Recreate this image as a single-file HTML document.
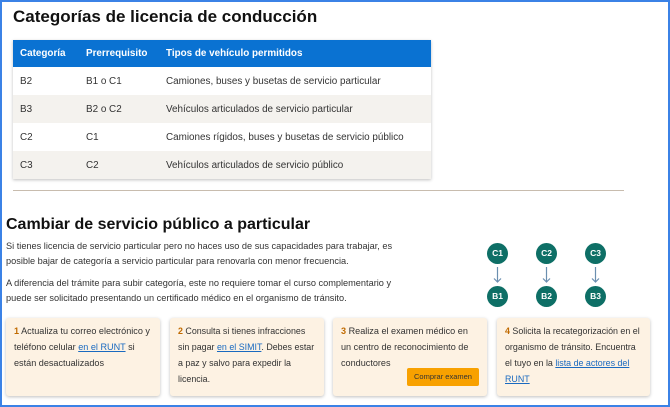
<!DOCTYPE html>
<html><head><meta charset="utf-8"><style>
*{margin:0;padding:0;box-sizing:border-box}
body{width:670px;height:407px;overflow:hidden;background:#fff;font-family:"Liberation Sans",sans-serif;color:#222;position:relative}
.frame{position:absolute;inset:0;border:2px solid #3b82e6}
h1{position:absolute;left:13px;top:7px;font-size:17px;font-weight:bold;color:#111}
table{position:absolute;left:13px;top:40px;width:418px;border-collapse:collapse;font-size:9.9px;box-shadow:0 1px 3px rgba(0,0,0,.25)}
th{background:#0a72d2;color:#fff;text-align:left;font-weight:bold;height:27px;padding-left:7px}
td{height:28px;padding-left:7px;color:#333}
.hr{position:absolute;left:13px;top:190px;width:611px;height:1px;background:#c8bcae}
h2{position:absolute;left:6px;top:216px;font-size:16px;font-weight:bold;color:#111}
p{position:absolute;left:6px;font-size:9.2px;line-height:15px;color:#333;width:396px}
.c{position:absolute;width:21px;height:21px;border-radius:50%;background:#0e6f66;color:#fff;font-size:8.5px;font-weight:bold;text-align:center;line-height:21px}
.ar{position:absolute;width:9px;height:16px;top:267px}
.card{position:absolute;top:318px;height:78px;background:#fdf2e3;border-radius:3px;box-shadow:0 1px 3px rgba(0,0,0,.25);font-size:9.1px;line-height:16px;padding:5px 8px;color:#333}
.nw{white-space:nowrap;font-size:8.9px}
.card b{color:#c06a00}
a{color:#1a6ac0;text-decoration:underline}
.btn{position:absolute;left:407px;top:368px;width:72px;height:18px;background:#f8a100;border-radius:2px;font-size:7.5px;text-align:center;line-height:18px;color:#333}
</style></head><body>
<h1>Categorías de licencia de conducción</h1>
<table>
<tr><th style="width:66px">Categoría</th><th style="width:80px">Prerrequisito</th><th>Tipos de vehículo permitidos</th></tr>
<tr><td style="background:#fff">B2</td><td style="background:#fff">B1 o C1</td><td style="background:#fff">Camiones, buses y busetas de servicio particular</td></tr>
<tr><td style="background:#f4f2ee">B3</td><td style="background:#f4f2ee">B2 o C2</td><td style="background:#f4f2ee">Vehículos articulados de servicio particular</td></tr>
<tr><td style="background:#fff">C2</td><td style="background:#fff">C1</td><td style="background:#fff">Camiones rígidos, buses y busetas de servicio público</td></tr>
<tr><td style="background:#f4f2ee">C3</td><td style="background:#f4f2ee">C2</td><td style="background:#f4f2ee">Vehículos articulados de servicio público</td></tr>
</table>
<div class="hr"></div>
<h2>Cambiar de servicio público a particular</h2>
<p style="top:239px">Si tienes licencia de servicio particular pero no haces uso de sus capacidades para trabajar, es<br>posible bajar de categoría a servicio particular para renovarla con menor frecuencia.</p>
<p style="top:276px">A diferencia del trámite para subir categoría, este no requiere tomar el curso complementario y<br>puede ser solicitado presentando un certificado médico en el organismo de tránsito.</p>
<div class="c" style="left:487px;top:243px">C1</div><div class="c" style="left:536px;top:243px">C2</div><div class="c" style="left:585px;top:243px">C3</div>
<svg class="ar" style="left:493px" viewBox="0 0 9 16"><path d="M4.5 0V15M1 11.5L4.5 15L8 11.5" stroke="#6b8fb0" stroke-width="1.2" fill="none"/></svg>
<svg class="ar" style="left:542px" viewBox="0 0 9 16"><path d="M4.5 0V15M1 11.5L4.5 15L8 11.5" stroke="#6b8fb0" stroke-width="1.2" fill="none"/></svg>
<svg class="ar" style="left:591px" viewBox="0 0 9 16"><path d="M4.5 0V15M1 11.5L4.5 15L8 11.5" stroke="#6b8fb0" stroke-width="1.2" fill="none"/></svg>
<div class="c" style="left:487px;top:286px">B1</div><div class="c" style="left:536px;top:286px">B2</div><div class="c" style="left:585px;top:286px">B3</div>
<div class="card" style="left:6px;width:154px"><b>1</b> Actualiza tu correo electrónico y teléfono celular <a>en el RUNT</a> si están desactualizados</div>
<div class="card nw" style="left:170px;width:154px"><b>2</b> Consulta si tienes infracciones<br>sin pagar <a>en el SIMIT</a>. Debes estar<br>a paz y salvo para expedir la<br>licencia.</div>
<div class="card" style="left:333px;width:154px"><b>3</b> Realiza el examen médico en un centro de reconocimiento de conductores</div>
<div class="btn">Comprar examen</div>
<div class="card nw" style="left:497px;width:153px"><b>4</b> Solicita la recategorización en el<br>organismo de tránsito. Encuentra<br>el tuyo en la <a>lista de actores del</a><br><a>RUNT</a></div>
<div class="frame"></div>
</body></html>
